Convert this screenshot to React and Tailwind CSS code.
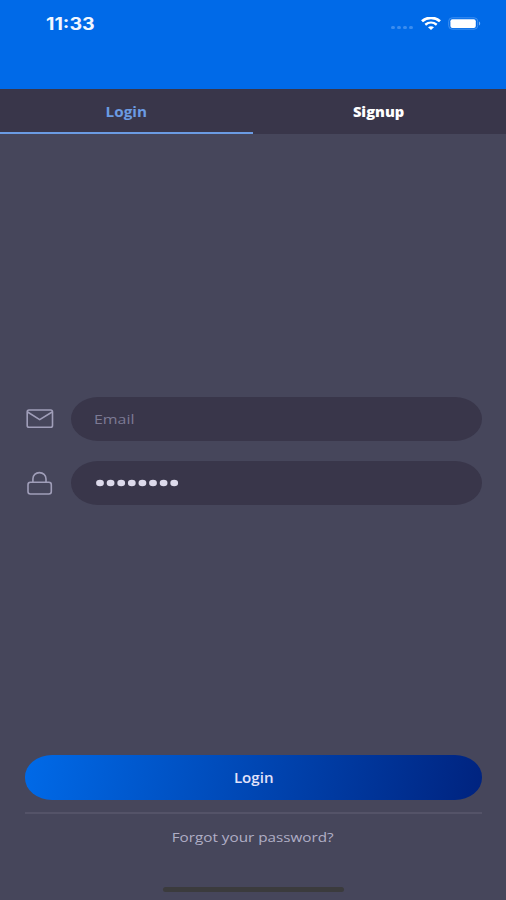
function StatusBar() {
  return (
    <header className="flex h-[89px] items-start justify-between bg-[#006ae8] pl-[46px] pr-[25px] pt-[13px]">
      <span className="origin-left scale-x-[1.15] font-['Inter',sans-serif] text-[17px] leading-[22px] font-bold text-[#f2f7ff]">11:33</span>
      <div className="flex h-5 items-center">
        <div className="mt-[8px] mr-[8px] flex gap-[2px]">
          {[0, 1, 2, 3].map((i) => (
            <i key={i} className="h-[3px] w-[4px] rounded-full bg-[#3b8def]" />
          ))}
        </div>
        <svg width="20" height="13" viewBox="0 0 20 13" fill="none" stroke="#fff" className="mr-[7px]">
          <path d="M1 4.3C6-.2 14-.2 19 4.3" strokeWidth="2.8" />
          <path d="M4.3 7.7c3.4-2.8 8-2.8 11.4 0" strokeWidth="2.4" />
          <path d="M7 10.3c1.8-1.5 4.2-1.5 6 0L10 13Z" fill="#fff" stroke="none" />
        </svg>
        <svg width="33" height="13" viewBox="0 0 33 13">
          <rect x=".7" y=".8" width="29" height="11.4" rx="3.5" fill="none" stroke="#3f91f1" />
          <rect x="2.4" y="2.3" width="25.4" height="8.8" rx="2" fill="#fff" />
          <path d="M31 4.5c1.6.8 1.6 3.2 0 4Z" fill="#78b3f7" />
        </svg>
      </div>
    </header>
  );
}

function Tabs() {
  return (
    <nav className="grid h-[45px] grid-cols-2 bg-[#39364a] text-center font-['Open_Sans',sans-serif] text-[13.5px] leading-[47px] font-extrabold">
      <div className="h-[45px] border-b-2 border-[#6b9be3] text-[#6b9be3]">
        <span className="inline-block scale-x-[1.13] font-bold">Login</span>
      </div>
      <div className="h-[45px] text-white">
        <span className="inline-block -translate-x-px scale-x-[1.09]">Signup</span>
      </div>
    </nav>
  );
}

function MailIcon() {
  return (
    <svg width="28" height="20" viewBox="0 0 28 20" fill="none" stroke="#a09eb9" strokeWidth="1.6" strokeLinejoin="round">
      <rect x="1.2" y="1" width="25.3" height="17.3" rx="1.8" />
      <path d="M1.6 3 13.7 10.6 26.1 3" />
    </svg>
  );
}

function LockIcon() {
  return (
    <svg width="28" height="24" viewBox="0 0 28 24" fill="none" stroke="#a09eb9" strokeWidth="1.6">
      <rect x="2" y="11.3" width="23.3" height="11.7" rx="2.4" />
      <path d="M6.9 11.3V8C6.9 4.2 9.7 1.6 13.4 1.6s6.6 2.6 6.6 6.4v3.3" />
    </svg>
  );
}

function PasswordDots() {
  return (
    <svg width="86" height="8" viewBox="0 0 86 8" fill="#dddaeb">
      {[0, 1, 2, 3, 4, 5, 6, 7].map((i) => (
        <ellipse key={i} cx={4 + i * 10.6} cy="4" rx="3.9" ry="3.3" />
      ))}
    </svg>
  );
}

export default function App() {
  return (
    <main className="flex h-[900px] w-[506px] flex-col overflow-hidden bg-[#46465b] font-['Open_Sans',sans-serif]">
      <StatusBar />
      <Tabs />
      <section className="mt-[263px] flex flex-col gap-[20px] pr-[24px] pl-[26px]">
        <div className="flex h-[44px] items-center">
          <div className="w-[45px]"><MailIcon /></div>
          <div className="flex h-[44px] flex-1 items-center rounded-[27px/22px] bg-[#39364a] pl-[23px]">
            <span className="origin-left scale-x-[1.18] text-[13.5px] font-medium text-[#7d7a94]">Email</span>
          </div>
        </div>
        <div className="flex h-[44px] items-center">
          <div className="w-[45px]"><LockIcon /></div>
          <div className="flex h-[44px] flex-1 items-center rounded-[27px/22px] bg-[#39364a] pl-[25px]">
            <PasswordDots />
          </div>
        </div>
      </section>
      <footer className="mt-[250px] flex flex-col pr-[24px] pl-[25px] text-center text-[13.5px]">
        <div className="h-[45px] rounded-[27px/22px] bg-[linear-gradient(100deg,#006ae8,#00237f)] leading-[47px] font-semibold text-[#e2e2fa]">
          <span className="inline-block scale-x-[1.12]">Login</span>
        </div>
        <div className="mt-[12px] h-[2px] bg-[#545368]" />
        <div className="mt-[13px] h-5 leading-5 font-medium text-[#b0aec6]">
          <span className="inline-block -translate-x-px scale-x-[1.13]">Forgot your password?</span>
        </div>
        <div className="mt-[40px] ml-[138px] h-[5px] w-[181px] rounded-full bg-[#3b3b3d]" />
      </footer>
    </main>
  );
}
